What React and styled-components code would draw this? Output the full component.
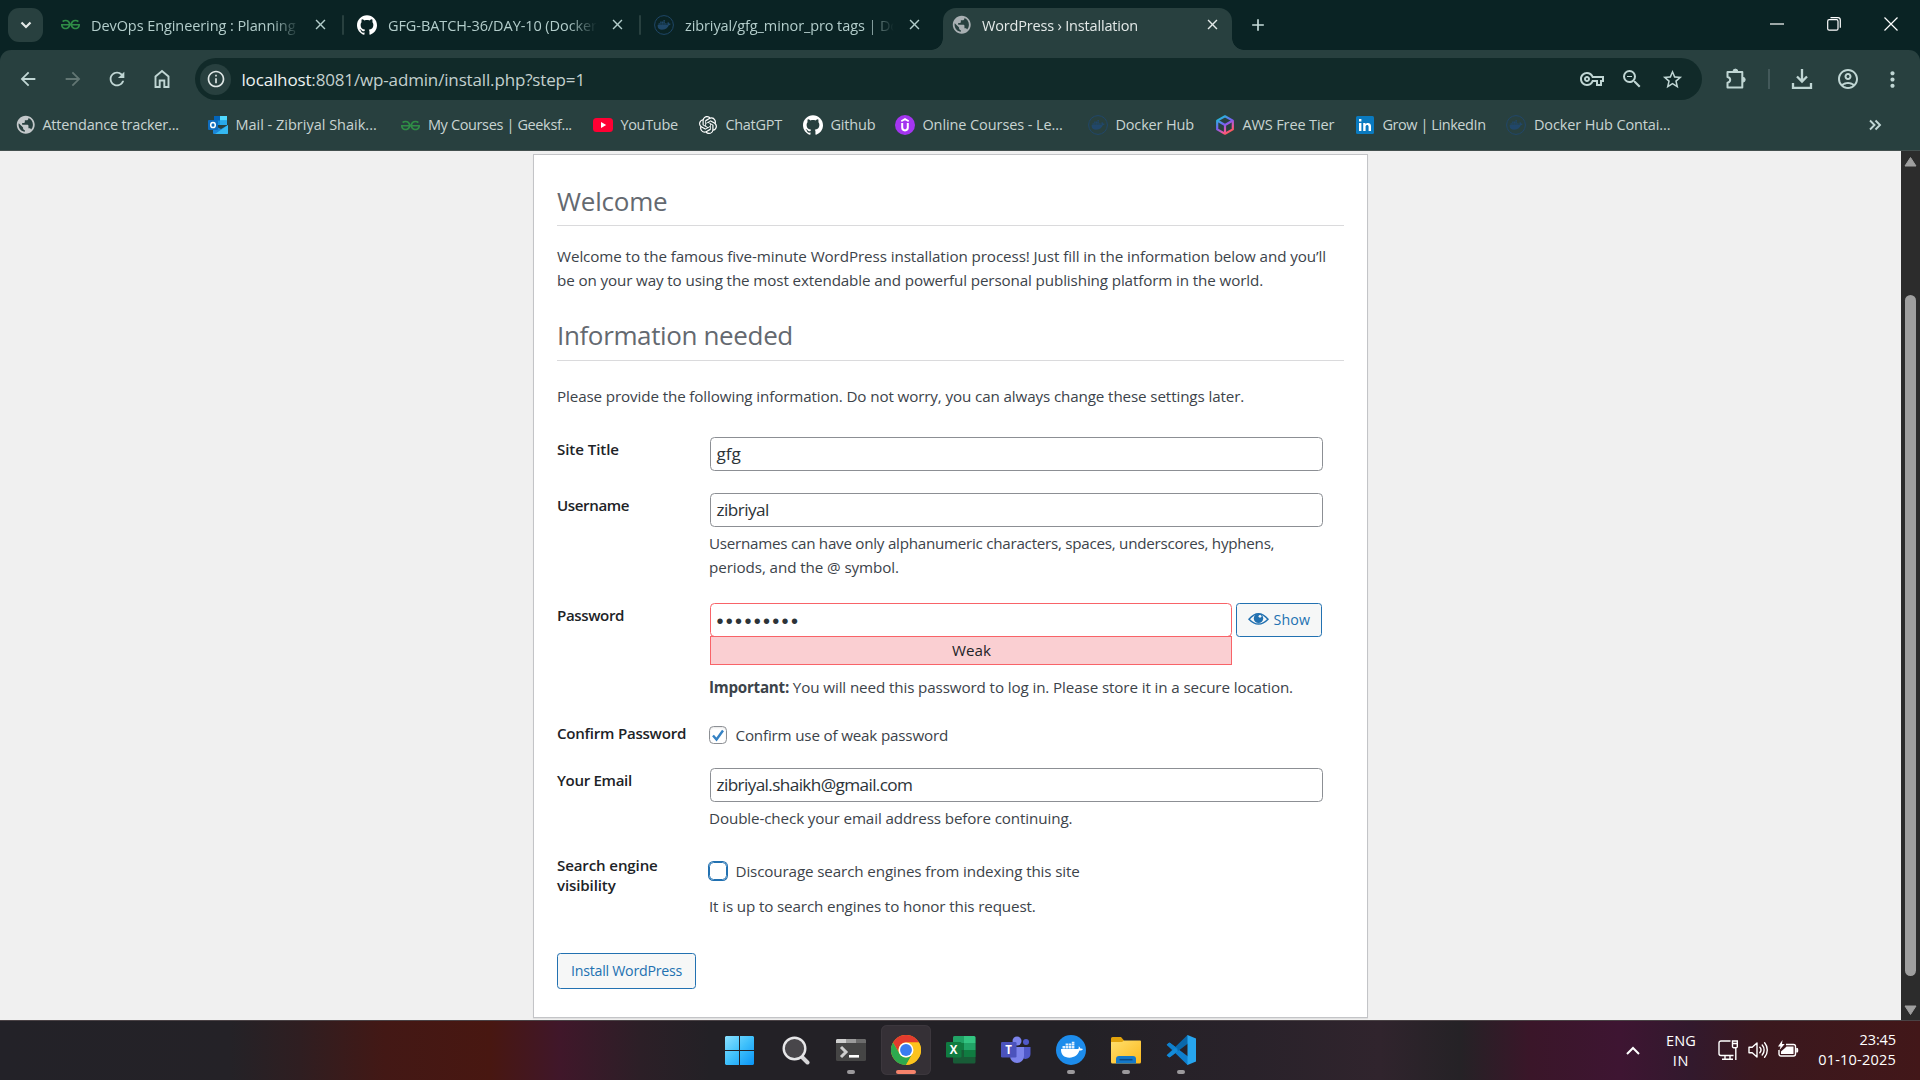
import React from "react";
import styled, { createGlobalStyle, css } from "styled-components";
import {
  MdPublic, MdArrowBack, MdArrowForward, MdRefresh, MdInfoOutline, MdOutlineVpnKey,
  MdZoomOut, MdStarBorder, MdOutlineAccountCircle, MdMoreVert,
  MdClose, MdAdd,
} from "react-icons/md";
import { SiGithub, SiDocker, SiOpenai, SiGeeksforgeeks } from "react-icons/si";

const GlobalStyle = createGlobalStyle`
  * { box-sizing: border-box; }
  body {
    margin: 0;
    overflow: hidden;
    font-family: "Open Sans", "Noto Sans", sans-serif;
    background: #0a2324;
  }
  svg { display: block; flex: none; }
`;

const Screen = styled.div`
  width: 1920px;
  height: 1080px;
  display: flex;
  flex-direction: column;
  overflow: hidden;
`;

const T = styled.span`
  letter-spacing: ${(p) => p.$ls || 0}em;
  white-space: pre;
`;

/* ---------- tab strip ---------- */

const TabStrip = styled.header`
  height: 50px;
  flex: none;
  display: flex;
  padding-left: 8px;
  background: #0a2324;
`;

const TabSearch = styled.div`
  width: 35px;
  height: 34px;
  margin: 8px 4px 0 0;
  border-radius: 11px;
  background: #28403f;
  color: #e3e9e8;
  display: grid;
  place-items: center;
`;

const flare = css`
  content: "";
  position: absolute;
  bottom: 0;
  width: 12px;
  height: 12px;
`;

const Tab = styled.div`
  width: ${(p) => (p.$active ? 289 : 297)}px;
  height: ${(p) => (p.$active ? 42.5 : 34)}px;
  margin: 7.5px 0 0 ${(p) => (p.$active ? 4.5 : 0)}px;
  padding-left: ${(p) => (p.$active ? 8.5 : 13)}px;
  display: flex;
  align-items: ${(p) => (p.$active ? "flex-start" : "center")};
  position: relative;
  border-radius: 13px 13px 0 0;
  font-size: 14.5px;
  color: ${(p) => (p.$active ? "#e3e9e8" : "#b3cdcb")};
  background: ${(p) => (p.$active ? "#28403f" : "transparent")};
  ${(p) => p.$active && css`
    &::before { ${flare} left: -12px; background: radial-gradient(circle at 0 0, transparent 11.5px, #28403f 12.2px); }
    &::after { ${flare} right: -12px; background: radial-gradient(circle at 100% 0, transparent 11.5px, #28403f 12.2px); }
  `}
`;

const TabBody = styled.div`
  height: 34px;
  display: flex;
  align-items: center;
`;

const Slot = styled.span`
  width: ${(p) => p.$w || 20}px;
  height: 22px;
  flex: none;
  display: grid;
  place-items: center;
  color: ${(p) => p.$c || "inherit"};
`;

const TabTitle = styled(T)`
  width: 211px;
  margin: 2px 8px 0 11px;
  line-height: 22px;
  mask-image: linear-gradient(90deg, #000 ${(p) => (p.$fade ? "180px, transparent 209px" : "100%, #000")});
`;

const Separator = styled.i`
  width: 2px;
  height: ${(p) => p.$h || 20}px;
  border-radius: 1px;
  background: #28403f;
  margin-left: auto;
`;

const NewTab = styled.div`
  width: 30px;
  height: 34px;
  margin: 8px 0 0 11px;
  display: grid;
  place-items: center;
  color: #c6dbd9;
`;

const WindowButtons = styled.div`
  margin-left: auto;
  padding-right: 1px;
  height: 48px;
  display: flex;
  color: #fff;
`;

const WindowButton = styled.div`
  width: 57px;
  display: grid;
  place-items: center;
`;

/* ---------- toolbar ---------- */

const Chrome = styled.div`
  height: 101px;
  flex: none;
  background: #28403f;
  border-radius: 11px 11px 0 0;
  border-bottom: 1px solid #43504f;
`;

const Toolbar = styled.div`
  height: 58px;
  display: flex;
  align-items: center;
  padding-left: 5.4px;
`;

const ToolButton = styled.div`
  width: ${(p) => p.$w || 44.8}px;
  height: 40px;
  display: grid;
  place-items: center;
  color: ${(p) => (p.$dim ? "#627673" : "#c0d6d4")};
`;

const AddressBar = styled.div`
  width: 1507px;
  height: 42px;
  margin-left: 10.4px;
  padding: 0 9px 0 5.5px;
  display: flex;
  align-items: center;
  border-radius: 21px;
  background: #112a29;
  color: #c3d0ce;
`;

const SiteInfo = styled.div`
  width: 31px;
  height: 31px;
  border-radius: 50%;
  display: grid;
  place-items: center;
  background: #28403f;
  color: #dfe7e6;
`;

const Url = styled(T)`
  margin: 1px 0 0 10px;
  flex: 1;
  font-size: 17px;
  line-height: 26px;
  b { font-weight: 400; color: #eef3f2; }
`;

const ToolbarEnd = styled.div`
  display: flex;
  align-items: center;
  margin-left: 12.5px;
`;

const Divider = styled.i`
  width: 2px;
  height: 20px;
  margin: 0 9px 0 10px;
  background: #43595a;
`;

const Bookmarks = styled.nav`
  height: 34px;
  display: flex;
  align-items: center;
  padding-left: 14.5px;
`;

const Bookmark = styled.div`
  width: ${(p) => p.$w}px;
  display: flex;
  align-items: center;
  gap: 7.9px;
  font-size: 14.5px;
  line-height: 22px;
  color: #c8d4d2;
`;

const More = styled.div`
  margin-left: auto;
  width: 90px;
  display: grid;
  place-items: center;
  color: #c0d6d4;
`;

/* ---------- page ---------- */

const Viewport = styled.main`
  height: 869px;
  flex: none;
  display: flex;
  background: #f0f0f0;
`;

const PageArea = styled.div`
  flex: 1;
  padding: 3px 0 0 533px;
`;

const Card = styled.section`
  width: 835px;
  height: 864px;
  padding: 31px 23px 0;
  background: #fff;
  border: 1px solid #c3c4c7;
  box-shadow: 0 1px 1px rgba(0, 0, 0, 0.06);
`;

const Heading = styled.h1`
  margin: ${(p) => p.$mt || 0}px 0 0;
  padding-bottom: ${(p) => p.$pb}px;
  border-bottom: 1px solid #dadadc;
  font-size: 26px;
  font-weight: 400;
  line-height: 30px;
  color: #646970;
`;

const Para = styled.p`
  margin: ${(p) => p.$mt}px 0 0;
  font-size: 15.2px;
  line-height: 24px;
  color: #3c434a;
`;

const Form = styled.div`
  margin-top: 29px;
`;

const Row = styled.div`
  height: ${(p) => p.$h}px;
  display: grid;
  grid-template-columns: 152px 1fr;
`;

const Label = styled.div`
  padding-top: 2px;
  font-size: 15.1px;
  font-weight: 600;
  line-height: 20px;
  color: #1d2327;
`;

const Field = styled.div`
  min-width: 0;
`;

const Input = styled.div`
  width: ${(p) => p.$w || 613}px;
  height: 34px;
  padding: 0 0 1.5px 5.5px;
  margin-left: 1px;
  display: flex;
  align-items: center;
  border: 1px solid ${(p) => (p.$bad ? "#f86368" : "#8c8f94")};
  border-radius: 4.5px;
  font-size: 17.2px;
  color: #2c3338;
`;

const Dots = styled.span`
  font-family: "Liberation Sans", sans-serif;
  font-size: 20px;
  letter-spacing: 2.3px;
  margin-top: 4px;
`;

const PasswordLine = styled.div`
  display: flex;
  gap: 4px;
`;

const Strength = styled.div`
  height: 29px;
  margin-top: -1px;
  margin-left: 1px;
  padding: 0 0 2px 1px;
  display: grid;
  place-items: center;
  border: 1px solid #f86368;
  background: #facfd2;
  font-size: 15.2px;
  color: #1d2327;
`;

const Button = styled.div`
  width: ${(p) => p.$w}px;
  height: ${(p) => p.$h}px;
  padding-bottom: 1.5px;
  display: flex;
  align-items: center;
  justify-content: center;
  gap: 4.5px;
  border: 1px solid #2271b1;
  border-radius: 3.4px;
  background: #f6f7f7;
  color: #2271b1;
  font-size: 14.2px;
`;

const CheckLine = styled.div`
  height: 24px;
  margin-top: ${(p) => p.$mt}px;
  display: flex;
  align-items: center;
  gap: 8.5px;
  font-size: 15.2px;
  color: #3c434a;
`;

const Checkbox = styled.span`
  width: 18px;
  height: 18px;
  display: grid;
  place-items: center;
  border: 1px solid ${(p) => (p.$focus ? "#2271b1" : "#8c8f94")};
  border-radius: 4.5px;
  box-shadow: ${(p) => (p.$focus ? "0 0 0 1px #2271b1" : "inset 0 1px 2px rgba(0,0,0,.1)")};
`;

const ScrollTrack = styled.div`
  width: 19px;
  background: #2c2c2c;
  display: flex;
  flex-direction: column;
  align-items: center;
  padding: 5px 0 4px;
`;

const Thumb = styled.div`
  width: 11px;
  height: 681px;
  margin: 128px 0 auto;
  border-radius: 6px;
  background: #9f9f9f;
`;

/* ---------- taskbar ---------- */

const Taskbar = styled.footer`
  height: 60px;
  flex: none;
  display: flex;
  border-top: 1px solid #4a4245;
  background: linear-gradient(90deg, #232228 0, #242227 230px, #2f1e21 300px, #431815 385px, #481711 490px,
    #40172a 560px, #2c1f27 640px, #232126 710px, #232126 1080px, #29222a 1250px, #30242d 1380px,
    #252226 1460px, #3a1629 1530px, #3e1532 1620px, #32192d 1690px, #3a181e 1760px, #421719 1920px);
  color: #fff;
`;

const Apps = styled.div`
  display: flex;
  gap: 5px;
  padding: 4px 0 0 716px;
`;

const AppCell = styled.div`
  width: 50px;
  height: 50px;
  margin-left: ${(p) => (p.$first ? -2 : 0)}px;
  margin-right: ${(p) => (p.$first ? 2 : 0)}px;
  display: flex;
  flex-direction: column;
  align-items: center;
  border-radius: 6px;
  background: ${(p) => (p.$active ? "#353036" : "transparent")};
  box-shadow: ${(p) => (p.$active ? "inset 0 0 0 1px #3c373d" : "none")};
`;

const AppIcon = styled.div`
  flex: none;
  height: 50px;
  display: grid;
  place-items: center;
`;

const Running = styled.i`
  width: ${(p) => (p.$active ? 20 : 8)}px;
  height: 4px;
  flex: none;
  border-radius: 2px;
  margin-top: -5px;
  background: ${(p) => (p.$active ? "#f6836b" : p.$on ? "#9b999c" : "transparent")};
`;

const Tray = styled.div`
  margin-left: auto;
  display: flex;
  align-items: center;
  padding-right: 24px;
  font-size: 14.5px;
  line-height: 20px;
`;

const Lang = styled.div`
  width: 32px;
  margin: 0 21px 0 25px;
  display: flex;
  flex-direction: column;
  align-items: center;
`;

const TrayIcons = styled.div`
  width: 80px;
  margin-bottom: 2px;
  display: flex;
  gap: 9.5px;
`;

const Clock = styled.div`
  width: 98px;
  margin-top: -2px;
  display: flex;
  flex-direction: column;
  align-items: flex-end;
`;

/* ---------- drawings ---------- */

const DockerBadge = ({ c = "#1f4768" }) => (
  <svg width="20" height="20" viewBox="0 0 20 20">
    <circle cx="10" cy="10" r="9.4" fill="none" stroke={c} strokeWidth="1" />
    <g transform="translate(3.4 3.2) scale(.56)" fill={c}><SiDocker size={24} color={c} /></g>
  </svg>
);

const Gfg = () => <SiGeeksforgeeks size={19} color="#2f8d46" />;
const Globe = () => <MdPublic size={21.5} color="#c3c8ca" />;

const Outlook = () => (
  <svg width="20" height="18" viewBox="0 0 20 18">
    <path d="M6 0h13v9H6z" fill="#1490df" />
    <path d="M12 0h7v4.500h-7z" fill="#50d9ff" />
    <path d="M6 0h6v4.500H6z" fill="#0364b8" />
    <path d="M12 4.500h7V9h-7z" fill="#28a8ea" />
    <path d="M5 9l8 4 7-4v8a1 1 0 0 1-1 1H6a1 1 0 0 1-1-1z" fill="#1a86d8" />
    <path d="M20 9v8a1 1 0 0 1-1 1H7z" fill="#35b8f1" />
    <rect y="4" width="10" height="10" rx="1" fill="#0f6cbd" />
    <ellipse cx="5" cy="9" rx="2.300" ry="2.600" fill="none" stroke="#fff" strokeWidth="1.500" />
  </svg>
);

const YouTube = () => (
  <svg width="20" height="14" viewBox="0 0 20 14">
    <rect width="20" height="14" rx="3.500" fill="#ff0033" />
    <path d="M8 4l5.200 3L8 10z" fill="#fff" />
  </svg>
);

const Udemy = () => (
  <svg width="20" height="20" viewBox="0 0 20 20">
    <circle cx="10" cy="10" r="10" fill="#a435f0" />
    <path d="M6.300 6.200L10 4l3.700 2.200" fill="none" stroke="#fff" strokeWidth="1.700" />
    <path d="M7.200 8v4.600a2.800 2.800 0 0 0 5.600 0V8" fill="none" stroke="#fff" strokeWidth="2" />
  </svg>
);

const Aws = () => (
  <svg width="20" height="20" viewBox="0 0 20 20" fill="none" strokeWidth="2.200" strokeLinejoin="round">
    <defs>
      <linearGradient id="aws" gradientUnits="userSpaceOnUse" x1="4" y1="2" x2="15" y2="19">
        <stop offset="0" stopColor="#18c5d8" /><stop offset=".45" stopColor="#7c5cf5" />
        <stop offset=".75" stopColor="#f0569a" /><stop offset="1" stopColor="#ff5a3c" />
      </linearGradient>
    </defs>
    <path d="M10 1.300l7.800 4.300v8.800L10 18.700l-7.800-4.300V5.600z" stroke="url(#aws)" />
    <path d="M3 6l7 4 7-4M10 10v8" stroke="url(#aws)" />
  </svg>
);

const LinkedIn = () => (
  <svg width="18" height="18" viewBox="0 0 18 18">
    <rect width="18" height="18" rx="1.500" fill="#0a7abf" />
    <path d="M3 7h2.400v8H3zM3 3h2.400v2.400H3zM7.200 7h2.300v1.200c1.200-2 5.500-1.900 5.500 1.800v5h-2.400v-4.400c0-2.300-3-2-3 0V15H7.200z" fill="#fff" />
  </svg>
);

const Home = () => (
  <svg width="20" height="22" viewBox="0 0 20 22" fill="none" stroke="currentColor" strokeWidth="1.900">
    <path d="M3.500 8.500L10 3l6.500 5.500V19h-4.200v-6.500H7.700V19H3.500z" />
  </svg>
);

const Puzzle = () => (
  <svg width="24" height="24" viewBox="0 0 24 24" fill="none" stroke="currentColor" strokeWidth="2" strokeLinejoin="round">
    <path d="M3.500 5h14.800v15.500H3.500v-4.800c3.600-.6 3.600-5.200 0-5.800z" />
    <path d="M9 4.500a2.400 2.400 0 0 1 4.800 0zM18.800 10.300a2.400 2.400 0 0 1 0 4.800z" fill="currentColor" strokeWidth="1" />
  </svg>
);

const Download = () => (
  <svg width="22" height="22" viewBox="0 0 22 22" fill="none" stroke="currentColor" strokeWidth="2.300">
    <path d="M11 1v12M6 8.500l5 5 5-5M2 15v4.800h18V15" />
  </svg>
);

const Eye = () => (
  <svg width="21" height="14" viewBox="0 0 21 14">
    <path d="M1 7.200Q10.500-3.600 20 7.200 10.500 17 1 7.200z" fill="none" stroke="currentColor" strokeWidth="1.500" />
    <circle cx="10.500" cy="6.400" r="4.700" fill="currentColor" />
    <circle cx="12" cy="4.300" r="1.400" fill="#f6f7f7" />
  </svg>
);

const Windows = () => (
  <svg width="29" height="29" viewBox="0 0 29 29">
    <defs>
      <linearGradient id="win" gradientUnits="userSpaceOnUse" x1="0" y1="0" x2="29" y2="29">
        <stop offset="0" stopColor="#8be1ff" /><stop offset=".5" stopColor="#3ec0fb" /><stop offset="1" stopColor="#0a94f6" />
      </linearGradient>
    </defs>
    <path d="M1 0h13v14H0V1zM15 0h13l1 1v13H15zM0 15h14v14H1l-1-1zM15 15h14v13l-1 1H15z" fill="url(#win)" />
  </svg>
);

const Search = () => (
  <svg width="28" height="29" viewBox="0 0 28 29">
    <path d="M19.500 20.500l6 6" stroke="#d5d5d7" strokeWidth="4" strokeLinecap="round" />
    <circle cx="12.500" cy="12.500" r="10.800" fill="#48464a" stroke="#e6e6e8" strokeWidth="2.400" />
  </svg>
);

const Terminal = () => (
  <svg width="30" height="28" viewBox="0 0 30 28">
    <rect y="3" width="30" height="22" rx="1.500" fill="#454545" />
    <path d="M1 3h9v4H0V4z" fill="#cfcfcf" />
    <path d="M10 3h10v4H10z" fill="#9b9b9b" />
    <path d="M20 3h9l1 1v3H20z" fill="#6c6c6c" />
    <path d="M5 11l5 5-5 5" fill="none" stroke="#cfcfcf" strokeWidth="3" />
    <path d="M13 19h10v2.600H13z" fill="#fff" />
  </svg>
);

const ChromeLogo = () => (
  <svg width="30" height="30" viewBox="0 0 48 48">
    <circle cx="24" cy="24" r="24" fill="#fbbc04" />
    <path d="M3.200 12A24 24 0 0 1 44.800 12H24a12 12 0 0 0-10.400 18z" fill="#e33b2e" />
    <path d="M3.200 12A24 24 0 0 0 24 48l10.400-18a12 12 0 0 1-20.800 0z" fill="#2da94f" />
    <path d="M44.800 12A24 24 0 0 1 24 48l10.400-18A12 12 0 0 0 24 12z" fill="#fcc31e" />
    <circle cx="24" cy="24" r="12" fill="#fff" />
    <circle cx="24" cy="24" r="9.500" fill="#3a7cf0" />
  </svg>
);

const badgeText = { fontFamily: "Open Sans, sans-serif", fontWeight: 700, textAnchor: "middle" };

const Excel = () => (
  <svg width="30" height="28" viewBox="0 0 30 28">
    <rect x="7" width="22.500" height="27.500" rx="1.500" fill="#185c37" />
    <path d="M7 1.500A1.500 1.500 0 0 1 8.500 0H18v7H7z" fill="#21a366" />
    <path d="M18 0h10a1.500 1.500 0 0 1 1.500 1.500V7H18z" fill="#33c481" />
    <path d="M7 7h11v7H7z" fill="#107c41" />
    <path d="M18 7h11.500v7H18z" fill="#21a366" />
    <path d="M18 14h11.500v7H18z" fill="#107c41" />
    <rect y="6" width="15.500" height="15.500" rx="1.300" fill="#107c41" />
    <text x="7.700" y="17.800" fontSize="11.500" fill="#fff" {...badgeText}>X</text>
  </svg>
);

const Teams = () => (
  <svg width="30" height="28" viewBox="0 0 30 28">
    <circle cx="25" cy="6" r="3" fill="#5059c9" />
    <circle cx="16" cy="5" r="4.500" fill="#7b83eb" />
    <path d="M21 11h8.500v7a5 5 0 0 1-8.500 3.500z" fill="#5059c9" />
    <path d="M9 11h14v9a7 7 0 0 1-14 0z" fill="#7b83eb" />
    <rect y="6" width="15.500" height="15.500" rx="1.300" fill="#4b53bc" />
    <text x="7.700" y="17.800" fontSize="11.500" fill="#fff" {...badgeText}>T</text>
  </svg>
);

const DockerApp = () => (
  <svg width="30" height="30" viewBox="0 0 30 30">
    <circle cx="15" cy="15" r="15" fill="#1d8ceb" />
    <path d="M5 14h16.500c1 0 1.500-.8 1.200-2.800 1 .6 1.400 1.300 1.500 2.300 1-.2 2 0 2.800.5-.7 1.300-2 1.700-3.600 1.600C22 20 18.500 22.700 13.500 22.700 8 22.700 4.800 19.500 5 14z" fill="#fff" />
    <path d="M6.500 11h2.600v2.400H6.500zM9.600 11h2.600v2.400H9.600zM12.700 11h2.600v2.400h-2.600zM15.800 11h2.600v2.400h-2.600zM9.600 8.600h2.600v2H9.600zM12.700 8.600h2.600v2h-2.600zM15.800 8.600h2.600v2h-2.600zM15.800 6.800h2.600v1.400h-2.600z" fill="#e6f1fc" />
  </svg>
);

const Folder = () => (
  <svg width="30" height="28" viewBox="0 0 30 28">
    <defs>
      <linearGradient id="fold" x1="0" y1="0" x2="1" y2="1">
        <stop offset="0" stopColor="#ffdf6d" /><stop offset="1" stopColor="#fcb91d" />
      </linearGradient>
    </defs>
    <path d="M0 2.500A1.500 1.500 0 0 1 1.500 1H10l3 3.500V9H0z" fill="#e2a30c" />
    <path d="M0 8.500V6h11l2-1.500h16a1 1 0 0 1 1 1v20.500a1.500 1.500 0 0 1-1.500 1.500h-27A1.500 1.500 0 0 1 0 26z" fill="url(#fold)" />
    <path d="M5 27.500V23a3 3 0 0 1 3-3h14a3 3 0 0 1 3 3v4.500z" fill="#1478c8" />
    <path d="M8.500 23.700h13" stroke="#0a4a86" strokeWidth="1.500" />
  </svg>
);

const VsCode = () => (
  <svg width="30" height="30" viewBox="0 0 30 30">
    <path d="M.7 9.800l2-1.800c.5-.4 1-.4 1.500 0L22 21.500V30h-.5z" fill="#0f7fce" />
    <path d="M.7 20.200l2 1.800c.5.400 1 .4 1.500 0L22 8.500V0h-.5z" fill="#0a68ab" />
    <path d="M.7 9.800l2-1.800c.5-.4 1-.4 1.500 0L12 14 9 17z" fill="#1080cc" />
    <path d="M.7 20.200l2 1.800c.5.400 1 .4 1.500 0l8-6-3.200-3z" fill="#148bd8" />
    <path d="M21.500 0L30 3.500v23L21.500 30z" fill="#27a5ee" />
  </svg>
);

const Monitor = () => (
  <svg width="20" height="20" viewBox="0 0 20 20" fill="none" stroke="#fff" strokeWidth="1.400">
    <path d="M12.500 1H3a2 2 0 0 0-2 2v10.500a2 2 0 0 0 2 2h12.500M7 15.500v3.500M12 15.500v3.500M4 19.200h11" />
    <path d="M14.500 1h4.800v5.500a1.200 1.200 0 0 1-1.200 1.200h-2.400a1.200 1.200 0 0 1-1.200-1.200zM14.500 3.500h4.800M17.800 7.700V20" />
  </svg>
);

const Speaker = () => (
  <svg width="21" height="20" viewBox="0 0 21 20" fill="none" stroke="#fff" strokeWidth="1.400" strokeLinejoin="round" strokeLinecap="round">
    <path d="M1 7.300h3.200L9 3v14l-4.800-4.300H1z" />
    <path d="M11.800 7.300a4 4 0 0 1 0 5.400M14.200 5a7.500 7.500 0 0 1 0 10M16.600 2.800a11 11 0 0 1 0 14.400" />
  </svg>
);

const Battery = () => (
  <svg width="21" height="20" viewBox="0 0 21 20">
    <path d="M8 4.500h7.500a2 2 0 0 1 2 2V14a2 2 0 0 1-2 2H3a2 2 0 0 1-2-2v-4" fill="none" stroke="#fff" strokeWidth="1.400" />
    <path d="M8.500 6.500h7V14H3v-2.500L7 8z" fill="#fff" />
    <path d="M18.200 8h1.300c1 0 1 4.500 0 4.500h-1.300zM4.500 0L0 6.500h2.500L1.500 10l5.200-6H4z" fill="#fff" />
  </svg>
);

const Line = ({ d, w = 20, h = 20, s = 2 }) => (
  <svg width={w} height={h} viewBox={`0 0 ${w} ${h}`} fill="none" stroke="currentColor" strokeWidth={s}><path d={d} /></svg>
);

/* ---------- data ---------- */

const tabs = [
  { icon: <Gfg />, title: "DevOps Engineering : Planning", ls: -0.0055 },
  { icon: <SiGithub size={20} color="#fff" />, title: "GFG-BATCH-36/DAY-10 (Docker", ls: -0.0055 },
  { icon: <DockerBadge />, title: "zibriyal/gfg_minor_pro tags | Do", ls: -0.007 },
];

const bookmarks = [
  { icon: <Globe />, t: "Attendance tracker...", w: 193, ls: -0.0129 },
  { icon: <Outlook />, t: "Mail - Zibriyal Shaik...", w: 192.5, ls: 0 },
  { icon: <Gfg />, t: "My Courses | Geeksf...", w: 192.5, ls: -0.025 },
  { icon: <YouTube />, t: "YouTube", w: 105, ls: -0.022 },
  { icon: <SiOpenai size={18} color="#fff" />, t: "ChatGPT", w: 105, ls: -0.02 },
  { icon: <SiGithub size={20} color="#fff" />, t: "Github", w: 92, ls: -0.012 },
  { icon: <Udemy />, t: "Online Courses - Le...", w: 193, ls: -0.006 },
  { icon: <DockerBadge c="#21476a" />, t: "Docker Hub", w: 127, ls: -0.01 },
  { icon: <Aws />, t: "AWS Free Tier", w: 140, ls: -0.0077 },
  { icon: <LinkedIn />, t: "Grow | LinkedIn", w: 151.5, ls: -0.0295 },
  { icon: <DockerBadge c="#21476a" />, t: "Docker Hub Contai...", w: 180, ls: -0.0085 },
];

const apps = [
  { icon: <Windows />, first: true },
  { icon: <Search /> },
  { icon: <Terminal />, on: true },
  { icon: <ChromeLogo />, on: true, active: true },
  { icon: <Excel /> },
  { icon: <Teams /> },
  { icon: <DockerApp />, on: true },
  { icon: <Folder />, on: true },
  { icon: <VsCode />, on: true },
];

export default function App() {
  return (
    <Screen>
      <GlobalStyle />
      <TabStrip>
        <TabSearch><Line w={12} h={8} s={2.2} d="M1.500 1.500L6 6l4.500-4.500" /></TabSearch>
        {tabs.map((tab) => (
          <Tab key={tab.title}>
            <Slot>{tab.icon}</Slot>
            <TabTitle $fade $ls={tab.ls}>{tab.title}</TabTitle>
            <Slot><MdClose size={17} /></Slot>
            {tab !== tabs[2] && <Separator />}
          </Tab>
        ))}
        <Tab $active>
          <TabBody>
            <Slot><MdPublic size={21.5} color="#a9b0b3" /></Slot>
            <TabTitle $ls={-0.0124}>WordPress › Installation</TabTitle>
            <Slot $w={22}><MdClose size={17} /></Slot>
          </TabBody>
        </Tab>
        <NewTab><MdAdd size={20} /></NewTab>
        <WindowButtons>
          <WindowButton><Line w={14} h={2} s={1.2} d="M0 1h14" /></WindowButton>
          <WindowButton>
            <svg width="14" height="14" viewBox="0 0 14 14" fill="none" stroke="currentColor" strokeWidth="1.200">
              <rect x=".7" y="2.700" width="10.300" height="10.500" rx="1.500" />
              <path d="M3.500 .7h7.500a2.300 2.300 0 0 1 2.300 2.300v7.700" />
            </svg>
          </WindowButton>
          <WindowButton><Line w={14} h={14} s={1.2} d="M.5.500l13 13M13.500.500l-13 13" /></WindowButton>
        </WindowButtons>
      </TabStrip>

      <Chrome>
        <Toolbar>
          <ToolButton><MdArrowBack size={22} /></ToolButton>
          <ToolButton $dim><MdArrowForward size={22} /></ToolButton>
          <ToolButton><MdRefresh size={22} /></ToolButton>
          <ToolButton><Home /></ToolButton>
          <AddressBar>
            <SiteInfo><MdInfoOutline size={20} /></SiteInfo>
            <Url $ls={-0.0089}><b>localhost</b>:8081/wp-admin/install.php?step=1</Url>
            <ToolButton $w={40}><MdOutlineVpnKey size={24} /></ToolButton>
            <ToolButton $w={40}><MdZoomOut size={24} /></ToolButton>
            <ToolButton $w={41}><MdStarBorder size={23} /></ToolButton>
          </AddressBar>
          <ToolbarEnd>
            <ToolButton $w={44}><Puzzle /></ToolButton>
            <Divider />
            <ToolButton $w={46}><Download /></ToolButton>
            <ToolButton $w={45}><MdOutlineAccountCircle size={24} /></ToolButton>
            <ToolButton $w={44}><MdMoreVert size={25} /></ToolButton>
          </ToolbarEnd>
        </Toolbar>
        <Bookmarks>
          {bookmarks.map((b) => (
            <Bookmark key={b.t} $w={b.w}>
              <Slot>{b.icon}</Slot>
              <T $ls={b.ls}>{b.t}</T>
            </Bookmark>
          ))}
          <More><Line w={14} h={12} s={1.900} d="M2 1.500L6.500 6 2 10.500M7.500 1.500L12 6l-4.500 4.500" /></More>
        </Bookmarks>
      </Chrome>

      <Viewport>
        <PageArea>
          <Card>
            <Heading $pb={9}><T $ls={-0.0085}>Welcome</T></Heading>
            <Para $mt={18}>
              <T $ls={-0.0058}>Welcome to the famous five-minute WordPress installation process! Just fill in the information below and you’ll</T>
              <br />
              <T $ls={-0.008}>be on your way to using the most extendable and powerful personal publishing platform in the world.</T>
            </Para>
            <Heading as="h2" $mt={28} $pb={10}><T $ls={-0.014}>Information needed</T></Heading>
            <Para $mt={23}>
              <T $ls={-0.008}>Please provide the following information. Do not worry, you can always change these settings later.</T>
            </Para>

            <Form>
              <Row $h={56}>
                <Label><T $ls={-0.005}>Site Title</T></Label>
                <Field><Input><T $ls={0}>gfg</T></Input></Field>
              </Row>
              <Row $h={110}>
                <Label><T $ls={-0.026}>Username</T></Label>
                <Field>
                  <Input><T $ls={-0.032}>zibriyal</T></Input>
                  <Para $mt={3.5}>
                    <T $ls={-0.0173}>Usernames can have only alphanumeric characters, spaces, underscores, hyphens,</T>
                    <br />
                    <T $ls={-0.006}>periods, and the @ symbol.</T>
                  </Para>
                </Field>
              </Row>
              <Row $h={118}>
                <Label><T $ls={-0.026}>Password</T></Label>
                <Field>
                  <PasswordLine>
                    <div>
                      <Input $w={522} $bad><Dots>•••••••••</Dots></Input>
                      <Strength><T>Weak</T></Strength>
                    </div>
                    <Button $w={86} $h={34}><Eye /><T $ls={0.0085}>Show</T></Button>
                  </PasswordLine>
                  <Para $mt={10}>
                    <b><T $ls={-0.0167}>Important:</T></b>
                    <T $ls={-0.0076}> You will need this password to log in. Please store it in a secure location.</T>
                  </Para>
                </Field>
              </Row>
              <Row $h={47}>
                <Label><T $ls={-0.0165}>Confirm Password</T></Label>
                <Field>
                  <CheckLine $mt={2}>
                    <Checkbox>
                      <svg width="14" height="14" viewBox="0 0 14 14"><path d="M2 7.500l3.500 4L12 2.500" fill="none" stroke="#3582c4" strokeWidth="2.400" /></svg>
                    </Checkbox>
                    <T $ls={-0.012}>Confirm use of weak password</T>
                  </CheckLine>
                </Field>
              </Row>
              <Row $h={85}>
                <Label><T $ls={-0.022}>Your Email</T></Label>
                <Field>
                  <Input><T $ls={-0.036}>zibriyal.shaikh@gmail.com</T></Input>
                  <Para $mt={3.5}><T $ls={-0.0075}>Double-check your email address before continuing.</T></Para>
                </Field>
              </Row>
              <Row $h={100}>
                <Label><T $ls={-0.009}>Search engine</T><br /><T $ls={-0.0084}>visibility</T></Label>
                <Field>
                  <CheckLine $mt={6}>
                    <Checkbox $focus />
                    <T $ls={-0.0085}>Discourage search engines from indexing this site</T>
                  </CheckLine>
                  <Para $mt={11}><T $ls={-0.009}>It is up to search engines to honor this request.</T></Para>
                </Field>
              </Row>
            </Form>
            <Button $w={139} $h={36}><T $ls={-0.0172}>Install WordPress</T></Button>
          </Card>
        </PageArea>
        <ScrollTrack>
          <svg width="13" height="11" viewBox="0 0 13 11"><path d="M6.500 1.500L12 10H1z" fill="#9f9f9f" stroke="#9f9f9f" strokeLinejoin="round" /></svg>
          <Thumb />
          <svg width="13" height="11" viewBox="0 0 13 11"><path d="M6.500 9.500L12 1H1z" fill="#9f9f9f" stroke="#9f9f9f" strokeLinejoin="round" /></svg>
        </ScrollTrack>
      </Viewport>

      <Taskbar>
        <Apps>
          {apps.map((a, i) => (
            <AppCell key={i} $active={a.active} $first={a.first}>
              <AppIcon>{a.icon}</AppIcon>
              <Running $on={a.on} $active={a.active} />
            </AppCell>
          ))}
        </Apps>
        <Tray>
          <Line w={14} h={9} s={2} d="M1 8l6-6 6 6" />
          <Lang><T $ls={0.0108}>ENG</T><T $ls={0.05}>IN</T></Lang>
          <TrayIcons><Monitor /><Speaker /><Battery /></TrayIcons>
          <Clock><T $ls={-0.0067}>23:45</T><T $ls={0.015}>01-10-2025</T></Clock>
        </Tray>
      </Taskbar>
    </Screen>
  );
}
